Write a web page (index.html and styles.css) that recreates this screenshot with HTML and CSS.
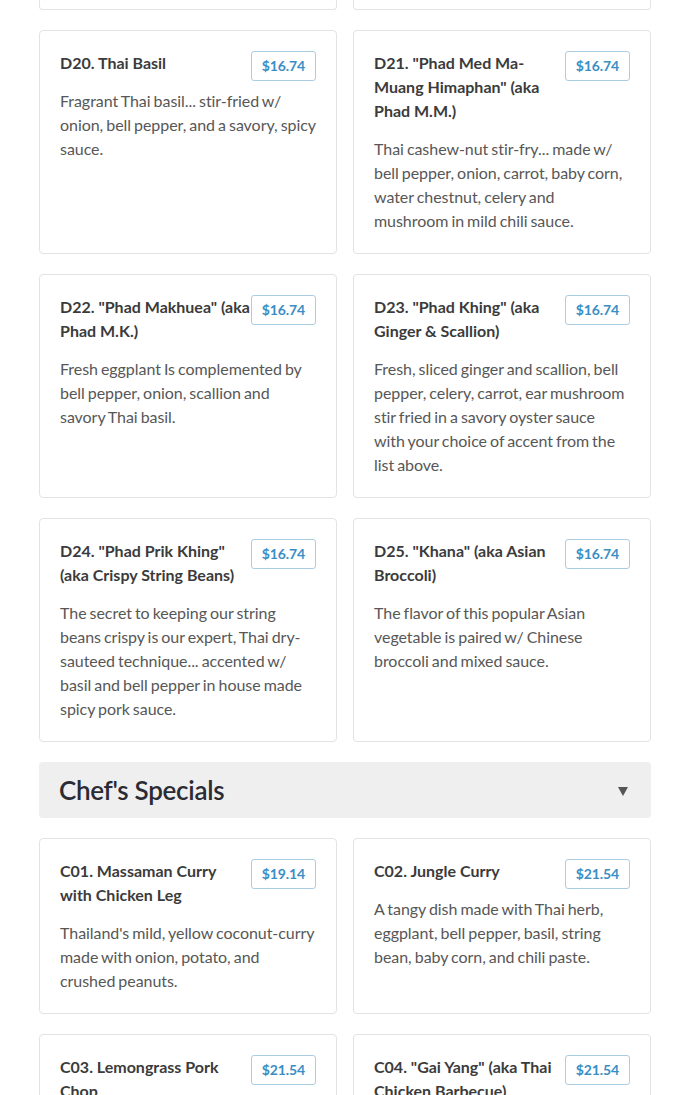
FILE: index.html
```html
<!DOCTYPE html>
<html lang="en">
<head>
<meta charset="utf-8">
<title>Menu</title>
<link rel="stylesheet" href="styles.css">
</head>
<body>
<main class="menu">
  <div class="grid">
    <div class="card card--tail"></div>
    <div class="card card--tail"></div>
  </div>

  <div class="grid">
    <article class="card">
      <span class="price">$16.74</span>
      <h3 class="title">D20. Thai Basil</h3>
      <p class="desc">Fragrant Thai basil... stir-fried w/ onion, bell pepper, and a savory, spicy sauce.</p>
    </article>
    <article class="card">
      <span class="price">$16.74</span>
      <h3 class="title">D21. "Phad Med Ma-Muang Himaphan" (aka Phad M.M.)</h3>
      <p class="desc">Thai cashew-nut stir-fry... made w/ bell pepper, onion, carrot, baby corn, water chestnut, celery and mushroom in mild chili sauce.</p>
    </article>
    <article class="card">
      <span class="price">$16.74</span>
      <h3 class="title">D22. "Phad Makhuea" (aka Phad M.K.)</h3>
      <p class="desc">Fresh eggplant Is complemented by bell pepper, onion, scallion and savory Thai basil.</p>
    </article>
    <article class="card">
      <span class="price">$16.74</span>
      <h3 class="title">D23. "Phad Khing" (aka Ginger &amp; Scallion)</h3>
      <p class="desc">Fresh, sliced ginger and scallion, bell pepper, celery, carrot, ear mushroom stir fried in a savory oyster sauce with&nbsp;your choice of accent from the list above.</p>
    </article>
    <article class="card">
      <span class="price">$16.74</span>
      <h3 class="title">D24. "Phad Prik Khing" (aka Crispy String Beans)</h3>
      <p class="desc">The secret to keeping our string beans crispy is our expert, Thai dry-sauteed technique... accented w/ basil and bell pepper in house made spicy pork sauce.</p>
    </article>
    <article class="card">
      <span class="price">$16.74</span>
      <h3 class="title">D25. "Khana" (aka Asian Broccoli)</h3>
      <p class="desc">The flavor of this popular Asian vegetable is paired w/ Chinese broccoli and mixed sauce.</p>
    </article>
  </div>

  <div class="section-head">
    <h2 class="section-title">Chef's Specials</h2>
    <svg class="caret" width="10" height="10" viewBox="0 0 10 10" aria-hidden="true"><polygon points="0,1 10,1 5,10" fill="#555"/></svg>
  </div>

  <div class="grid">
    <article class="card">
      <span class="price">$19.14</span>
      <h3 class="title">C01. Massaman Curry with Chicken Leg</h3>
      <p class="desc">Thailand's mild, yellow coconut-curry made with onion, potato, and crushed peanuts.</p>
    </article>
    <article class="card">
      <span class="price">$21.54</span>
      <h3 class="title">C02. Jungle Curry</h3>
      <p class="desc">A tangy dish made with Thai herb, eggplant, bell pepper, basil, string bean, baby corn, and chili paste.</p>
    </article>
    <article class="card">
      <span class="price">$21.54</span>
      <h3 class="title">C03. Lemongrass Pork Chop</h3>
      <p class="desc">Grilled pork chop marinated in lemongrass, served with sticky rice.</p>
    </article>
    <article class="card">
      <span class="price">$21.54</span>
      <h3 class="title">C04. "Gai Yang" (aka Thai Chicken Barbecue)</h3>
      <p class="desc">Marinated grilled chicken served with sweet chili sauce.</p>
    </article>
  </div>
</main>
</body>
</html>
```

FILE: styles.css
```css
html, body {
  margin: 0;
  padding: 0;
  background: #fff;
}

body {
  font-family: Lato, "Open Sans", "Liberation Sans", sans-serif;
  color: #333;
}

.menu {
  padding: 0 39px 40px 39px;
  display: flex;
  flex-direction: column;
  gap: 20px;
}

.grid {
  display: grid;
  grid-template-columns: 1fr 1fr;
  gap: 20px 16px;
}

.card {
  border: 1px solid #e3e3e3;
  border-radius: 4px;
  padding: 20px;
  background: #fff;
  min-width: 0;
}

.card--tail {
  height: 10px;
  padding: 0;
  border-top: none;
  border-radius: 0 0 4px 4px;
  box-sizing: border-box;
}

.price {
  float: right;
  margin-left: 0;
  padding: 5px 10px;
  border: 1px solid #a9cde2;
  border-radius: 3px;
  color: #3a8ec4;
  font-size: 14px;
  font-weight: 700;
  line-height: 18px;
  letter-spacing: -0.1px;
}

.title {
  margin: 0 0 14px;
  font-size: 16px;
  font-weight: 700;
  line-height: 24px;
  letter-spacing: 0;
  color: #3b3b3b;
}

.desc {
  margin: 0;
  font-size: 16px;
  line-height: 24px;
  letter-spacing: -0.05px;
  word-spacing: -1px;
  color: #575757;
}

.section-head {
  display: flex;
  align-items: center;
  justify-content: space-between;
  height: 56px;
  box-sizing: border-box;
  padding: 0 23px 0 20px;
  background: #efefef;
  border-radius: 4px;
}

.section-title {
  margin: 0;
  font-size: 26px;
  font-weight: 600;
  line-height: 30px;
  letter-spacing: -0.3px;
  color: #2b2b33;
}

.caret {
  display: block;
  margin-top: 2px;
}
```
